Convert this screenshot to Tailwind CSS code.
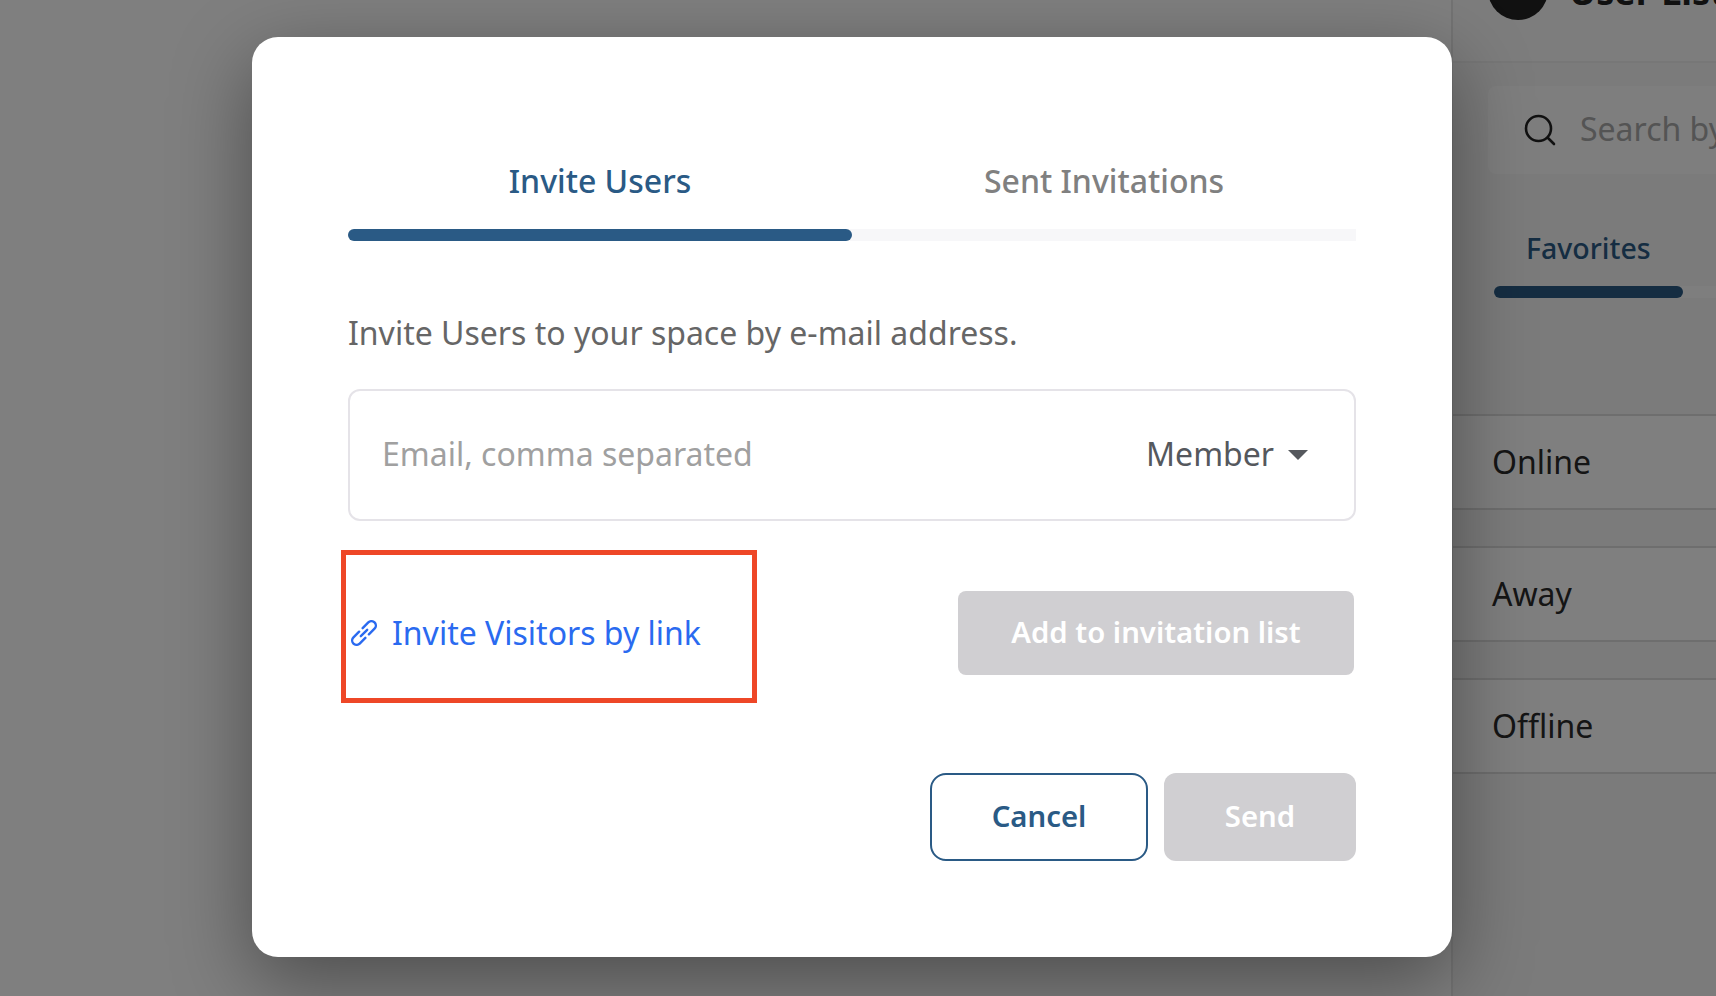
<!DOCTYPE html>
<html lang="en">
  <head>
    <meta charset="UTF-8" />
    <title>Invite Users</title>
    <script src="https://cdn.jsdelivr.net/npm/@tailwindcss/browser@4"></script>
  </head>

  <body class="relative h-[996px] w-[1716px] overflow-hidden bg-white font-['Noto_Sans',sans-serif]">
    <div class="flex h-full">
      <main class="w-[1451px] shrink-0"></main>

      <!-- user list panel behind the dialog -->
      <aside class="flex h-full w-[265px] shrink-0 flex-col overflow-hidden border-l-2 border-[#e6e6e6] bg-[#f6f6f6]">
        <div class="h-[63px] shrink-0 border-b-2 border-[#eeeeee] bg-[#fbfbfb] pl-[35px]">
          <div class="flex h-[20px] items-end gap-[21px]">
            <div class="h-[60px] w-[60px] shrink-0 rounded-full bg-[#222222]"></div>
            <span class="mb-[3px] text-[36px] leading-[50px] font-bold whitespace-nowrap text-[#222222]">User List</span>
          </div>
        </div>

        <div class="mt-[23px] ml-[35px] flex h-[88px] w-[300px] shrink-0 items-center gap-[24px] rounded-lg bg-[#fcfcfc] pl-[36px]">
          <svg class="h-[32px] w-[32px] shrink-0" viewBox="0 0 32 32" fill="none" stroke="#222222" stroke-width="2.6" stroke-linecap="round">
            <circle cx="14.5" cy="14.5" r="12.5" />
            <path d="M24 24l6 6" />
          </svg>
          <span class="mb-[2px] text-[32px] whitespace-nowrap text-[#a8a8a8]">Search by name</span>
        </div>

        <div class="mt-[54px] ml-[41px] flex w-[224px] shrink-0 flex-col">
          <div class="pl-[32px] text-[28.5px] leading-[40px] font-medium text-[#2a5a85]">Favorites</div>
          <div class="mt-[18px] h-[12px] w-full rounded-l-md bg-[#fcfcfc]">
            <div class="h-full w-[189px] rounded-md bg-[#2a5a85]"></div>
          </div>
        </div>

        <div class="mt-[116px] flex flex-col gap-[36px]">
          <div class="flex h-[96px] items-center border-y-2 border-[#dddddd] bg-white pl-[39px] text-[32px] text-[#2a2a2a]">Online</div>
          <div class="flex h-[96px] items-center border-y-2 border-[#dddddd] bg-white pl-[39px] text-[32px] text-[#2a2a2a]">Away</div>
          <div class="flex h-[96px] items-center border-y-2 border-[#dddddd] bg-white pl-[39px] text-[32px] text-[#2a2a2a]">Offline</div>
        </div>
      </aside>
    </div>

    <!-- dialog overlay -->
    <div class="absolute inset-0 bg-black/50 pt-[37px] pl-[252px]">
      <div class="relative h-[920px] w-[1200px] rounded-[26px] bg-white px-[96px] pt-[120px] shadow-[0_24px_80px_rgba(0,0,0,0.4)]">
        <div class="grid grid-cols-2 text-center text-[32px] leading-[48px] font-medium">
          <button class="text-[#2a5a85]">Invite Users</button>
          <button class="text-[#808080]">Sent Invitations</button>
        </div>
        <div class="mt-[24px] h-[12px] rounded-l-md bg-[#f7f7f9]">
          <div class="h-full w-[504px] rounded-md bg-[#2a5a85]"></div>
        </div>

        <p class="mt-[68px] text-[32px] leading-[48px] text-[#666666]">Invite Users to your space by e-mail address.</p>

        <div class="mt-[32px] flex h-[132px] items-center justify-between rounded-xl border-2 border-[#e5e3e8] pr-[46px] pl-[32px]">
          <span class="mb-[2px] text-[32px] text-[#a0a0a0]">Email, comma separated</span>
          <div class="flex items-center gap-[14px]">
            <span class="mb-[2px] text-[32px] text-[#55585d]">Member</span>
            <div class="h-0 w-0 border-x-[10px] border-t-[10px] border-x-transparent border-t-[#55585d]"></div>
          </div>
        </div>

        <div class="mt-[70px] flex items-center justify-between">
          <a class="flex items-center gap-[15px] pl-[3px] text-[32px] leading-[48px] text-[#2a6af0]">
            <svg class="h-[26px] w-[26px] shrink-0" viewBox="0 0 26 26" fill="none" stroke="#2a6af0" stroke-width="2.4" stroke-linecap="round" stroke-linejoin="round">
              <g transform="rotate(-45 13 13)">
                <path d="M10.5 8.6H2.5a4.4 4.4 0 0 0 0 8.8h8" />
                <path d="M15.5 8.6h8a4.4 4.4 0 0 1 0 8.8h-8" />
                <path d="M8.5 13h9" />
              </g>
            </svg>
            Invite Visitors by link
          </a>
          <button class="mr-[2px] flex h-[84px] w-[396px] items-center justify-center rounded-lg bg-[#d0cfd2] text-[29.3px] font-semibold text-white">Add to invitation list</button>
        </div>

        <div class="mt-[98px] flex justify-end gap-[16px]">
          <button class="h-[88px] w-[218px] rounded-2xl border-2 border-[#2a5a85] text-[29.3px] font-semibold text-[#2a5a85]">Cancel</button>
          <button class="h-[88px] w-[192px] rounded-xl bg-[#d0cfd2] text-[29.3px] font-semibold text-white">Send</button>
        </div>

        <!-- red annotation box -->
        <div class="absolute top-[513px] left-[89px] h-[153px] w-[416px] border-[5px] border-[#ee4727]"></div>
      </div>
    </div>
  </body>
</html>
